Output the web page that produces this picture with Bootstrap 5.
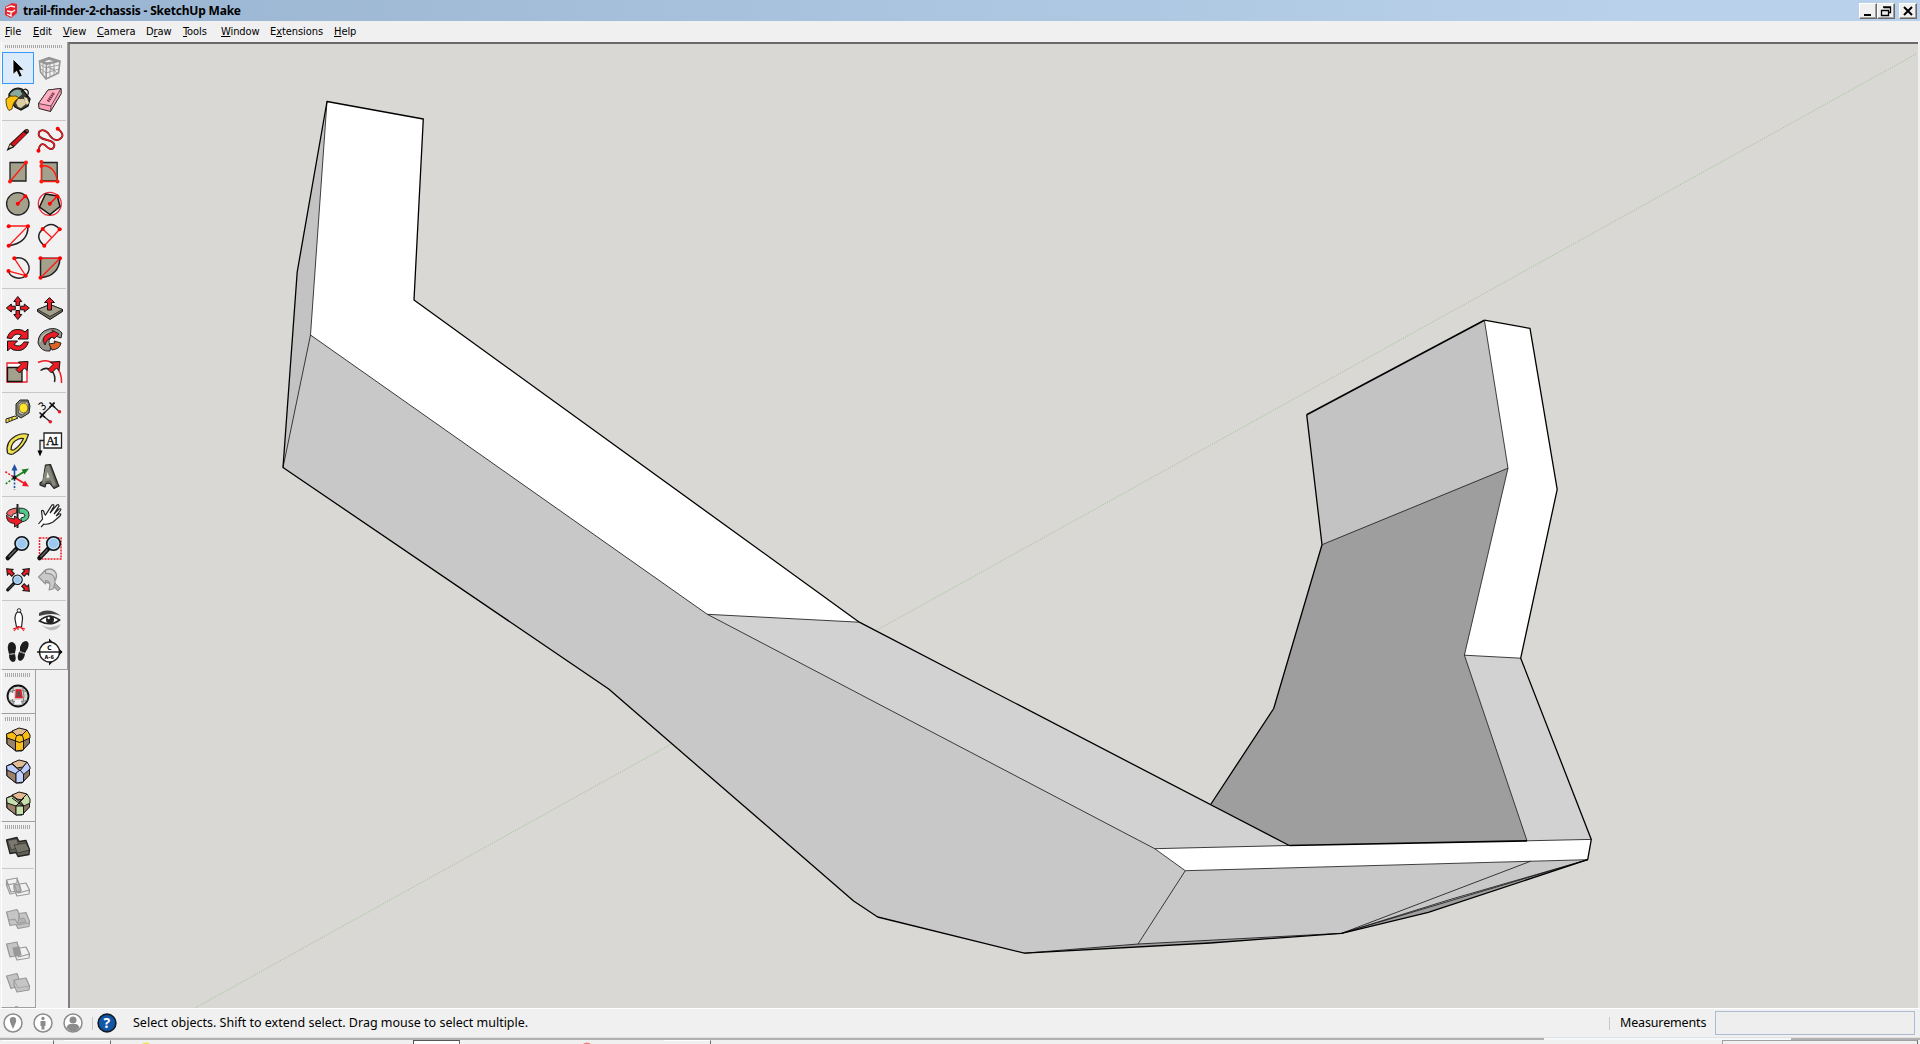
<!DOCTYPE html>
<html lang="en">
<head>
<meta charset="utf-8">
<title>trail-finder-2-chassis - SketchUp Make</title>
<link href="https://cdn.jsdelivr.net/npm/bootstrap@5.3.0/dist/css/bootstrap.min.css" rel="stylesheet">
<style>
html,body{height:100%;overflow:hidden}
body{background:#f0f0f0;color:#000;font-family:"DejaVu Sans Condensed","DejaVu Sans",sans-serif;font-size:11px;line-height:1}
svg{display:block;flex:none}
.titlebar{height:21px;background:linear-gradient(90deg,#99b4d1,#b9d1ea 85%);padding:0 3px 0 4px}
.titlebar h1{font-family:"Noto Sans",sans-serif;font-size:12px;line-height:21px;font-weight:700;margin:0 0 0 4px;width:230px;white-space:nowrap;letter-spacing:-.2px}
.winbtn{width:18px;height:16px;background:#f0f0f0;border:1px solid #fff;border-right-color:#696969;border-bottom-color:#696969;box-shadow:inset -1px -1px #a0a0a0;padding:0;border-radius:0}
.menubar{height:21px;padding-left:5px}
.menubar a{color:#000;text-decoration:none;font-family:"DejaVu Sans Condensed",sans-serif;white-space:nowrap;line-height:21px;letter-spacing:-.08px}
.menubar u{text-underline-offset:1px}
.dock{width:68px;padding-left:1px}
.bar{background:#f1f1f1;border-left:1px solid #fff;border-right:1px solid #a0a0a0;border-bottom:1px solid #a0a0a0;flex:none}
.bar-wide{width:67px;height:628px;border-right-width:1px}
.bar-thin{width:35px}
.bar .grip{height:4px;margin:3px 4px 3px 3px;background:repeating-linear-gradient(90deg,#a9a9a9 0 1px,transparent 1px 2px);width:26px}
.bar-wide .grip{width:57px;height:3px;margin-bottom:4px}
.bar .rule{height:1px;background:#c8c8c8;margin:4px 1px 3px 0}
.tools{width:64px}
.tool{width:32px;height:32px;padding:0;border:0;background:none;display:block}
.tool.active{background:#dbebfb;outline:1px solid #3399ff;outline-offset:-1px}
.viewport{background:#d9d8d4;border-left:2px solid #808080;border-top:2px solid #696969;margin-right:2px;min-width:0}
.statusbar{height:30px;border-top:1px solid #fff;font-family:"Noto Sans",sans-serif;font-size:12.5px;border-bottom:1px solid #e2e2e2;padding-left:3px}
.vr-line{width:1px;height:13px;background:#c8c8c8}
.measure{width:200px;height:24px;border:1px solid #abbbd3;background:#eee}
.taskstrip{height:6px;padding-top:2px;background:linear-gradient(90deg,#b0b0b0 1544px,#f4f8fa 1544px 1791px,#b0b0b0 1791px) 0 0/100% 2px no-repeat}
.taskstrip i{height:4px;border-top:1px solid #fff;border-right:1px solid #696969}
</style>
<script src="https://cdn.jsdelivr.net/npm/bootstrap@5.3.0/dist/js/bootstrap.bundle.min.js"></script>
</head>
<body class="d-flex flex-column">

<svg width="0" height="0" class="position-absolute">
 <defs>
  <g id="arrowUp"><path d="M0-11.500l4 5h-2.200v4h-3.600v-4H-4z" fill="#ed1c24" stroke="#111" stroke-width="1"/></g>
  <g id="lens"><path d="M-5 5L-14 14.500" stroke="#111" stroke-width="4.500" stroke-linecap="round"/><path d="M-6 6L-13 13.500" stroke="#666" stroke-width="1.400"/><circle r="6.800" fill="#9cc8ee" stroke="#111" stroke-width="1.600"/><circle r="5" fill="none" stroke="#c5e1f7" stroke-width="1"/></g>
  <g id="cube" stroke="#161616" stroke-width="1" stroke-linejoin="round"><path d="M4.500 10L16 5l7.500.500L27.500 11v7.500L20 27h-6L5 20z" fill="#927e68"/><path d="M5 13l9 4v10L5 20z" fill="#9b8269"/><path d="M20 17l7.500-4v6L20 27z" fill="#88755f"/></g>
 </defs>
</svg>

<header class="titlebar d-flex align-items-center">
 <svg width="15" height="15" viewBox="0 0 15 15"><path d="M1 4l7-4 5 1 0 9-6 5-6-3z" fill="#e8232b"/><path d="M2 5l5-2 4 1M3 8l5 1 3-2M3 11l4 2V9" fill="none" stroke="#fff" stroke-width="1.300"/></svg>
 <h1>trail-finder-2-chassis - SketchUp Make</h1>
 <div class="ms-auto d-flex">
  <button class="winbtn" aria-label="Minimize"><svg width="16" height="14"><path d="M4 10h7v2H4z"/></svg></button>
  <button class="winbtn" aria-label="Restore"><svg width="16" height="14"><path d="M5.500 3.500h7v5h-2M5 3h8M3.500 6.500h7v5h-7zM3 6.500h8" fill="none" stroke="#000" stroke-width="1.300"/></svg></button>
  <button class="winbtn ms-1" aria-label="Close"><svg width="16" height="14"><path d="M4 3l8 8M12 3l-8 8" stroke="#000" stroke-width="2"/></svg></button>
 </div>
</header>

<nav class="menubar d-flex">
 <a style="width:28px"><u>F</u>ile</a><a style="width:30px"><u>E</u>dit</a><a style="width:34px"><u>V</u>iew</a><a style="width:49px"><u>C</u>amera</a><a style="width:37px">D<u>r</u>aw</a><a style="width:38px"><u>T</u>ools</a><a style="width:49px"><u>W</u>indow</a><a style="width:64px">E<u>x</u>tensions</a><a><u>H</u>elp</a>
</nav>

<main class="d-flex flex-grow-1" style="min-height:0">
 <aside class="dock d-flex flex-column overflow-hidden flex-shrink-0">
  <div class="bar bar-wide">
   <div class="grip"></div>
   <div class="tools d-flex flex-wrap">
    <button class="tool active" aria-label="Select"><svg width="32" height="32"><path d="M11 7v15.500l3.600-3.300 2.700 6 3-1.300-2.700-5.700h4.800z" stroke="#fff" stroke-width=".8"/></svg></button>
    <button class="tool" aria-label="Make Component"><svg width="32" height="32" fill="none" stroke="#969696"><path d="M5.500 9L15 5.500l11 3.500-1.500 12L12 27 6.500 20zM5.500 9l7 3.500L26 9M12.500 12.500L12 27M8 9.500l7-2.500 8 2.500-10 1.500z" stroke-width="1.600"/><path d="M7 13l5 3 13-3M7 17l5 4 13-4M16 12v12M20 11v12M9 11v11M16 17h5M14 14l9 7" stroke-width=".9"/></svg></button>
    <button class="tool" aria-label="Paint Bucket"><svg width="32" height="32"><path d="M7 10Q12 2 20 5l4 5 4 5-2 7-7 4-6-3-6-8z" fill="#3c3c34" stroke="#111" stroke-width="1.300"/><path d="M8 10q5-6 11-3.500l1 4-5 4-5-1z" fill="#86a9a0"/><path d="M14 19l2-4 6 0 2 5-5 4-3-1z" fill="#dccda0"/><path d="M22 13l3 1 2 5-2 2-2-3z" fill="#e9dcb4"/><path d="M19 8q4-5 7-1 1 4-2 6" fill="none" stroke="#111" stroke-width="1.200"/><path d="M4 15q4-4 10-3l3 2q-6 3-7 11l-3 1.500q-3-3-3-11.500z" fill="#ffc20e" stroke="#4d3b08" stroke-width=".9"/></svg></button>
    <button class="tool" aria-label="Eraser"><svg width="32" height="32" stroke="#222" stroke-linejoin="round"><path d="M4.500 19.500L14 6l13-1.500.3 5L16.500 27.500 5 24.500z" fill="#ff9db4"/><path d="M4.500 19.500L14 6l13-1.500-10 17.500z" fill="#ffb0c2" stroke-width=".7"/><path d="M17 22l-.5 5.500" stroke-width=".7"/><path d="M14 17.500L20 8.500" stroke="#7d3247" stroke-width="3" stroke-dasharray="1.500 .6"/></svg></button>
   </div>
   <div class="rule"></div>
   <div class="tools d-flex flex-wrap">
    <button class="tool" aria-label="Line"><svg width="32" height="32"><path d="M4.500 27l3-7L23 5.500q4-1.500 4 2.500L11.500 23.500z" fill="#111"/><path d="M9 20L21.500 8l3 2L12 22z" fill="#d5131b"/><path d="M6.500 24l1.800-3.500 2.700 2.300z" fill="#e6cf9c"/><path d="M23 7l2.500-1 .5 2z" fill="#ef5858"/></svg></button>
    <button class="tool" aria-label="Freehand"><svg width="32" height="32"><path d="M24 5q9 7 0 11-5 1-10-7-5-5-9-1-2 6 8 8 9 2 7 7-3 5-9-2-5-3-6.500 5" fill="none" stroke="#3a1010" stroke-width="1.800"/><path d="M24 5q9 7 0 11-5 1-10-7-5-5-9-1-2 6 8 8 9 2 7 7-3 5-9-2-5-3-6.500 5" fill="none" stroke="#ed1c24" stroke-width="1.300"/><circle cx="23.700" cy="4.700" r="2" fill="red"/><circle cx="4.500" cy="26.700" r="2" fill="red"/></svg></button>
    <button class="tool" aria-label="Rectangle"><svg width="32" height="32"><path d="M8 6.500h16v18.500H8z" fill="#a3a08c" stroke="#222" stroke-width="1.300"/><path d="M8 25.500L24 6.500" stroke="#ff1a10" stroke-width="1.300"/><circle cx="8" cy="25.500" r="2" fill="#ff1a10"/><circle cx="24" cy="6.500" r="2" fill="#ff1a10"/></svg></button>
    <button class="tool" aria-label="Rotated Rectangle"><svg width="32" height="32"><path d="M7.500 6.500h15.700v18.500H7.500z" fill="#a3a08c" stroke="#222" stroke-width="1.300"/><path d="M7.500 6.500v19h16M7.500 9.500q14 0 15.800 16" fill="none" stroke="#ff1a10" stroke-width="1.300"/><g fill="#ff1a10"><circle cx="7.400" cy="6" r="2"/><circle cx="7.400" cy="10" r="2"/><circle cx="7.400" cy="25.500" r="2"/><circle cx="23.500" cy="25.500" r="2"/></g></svg></button>
    <button class="tool" aria-label="Circle"><svg width="32" height="32"><circle cx="15.800" cy="15.800" r="11.200" fill="#a3a08c" stroke="#222" stroke-width="1.300"/><path d="M15.800 15.800L23.300 8.300" stroke="red" stroke-width="1.300"/><circle cx="15.800" cy="15.800" r="2" fill="red"/><circle cx="23.300" cy="8.300" r="2" fill="red"/></svg></button>
    <button class="tool" aria-label="Polygon"><svg width="32" height="32"><circle cx="15.800" cy="15.800" r="11.500" fill="none" stroke="#ee2a34" stroke-width="1.300"/><path d="M11.500 6L23.300 8l2.700 10.500-10 8L5.500 19z" fill="#a3a08c" stroke="#111" stroke-width="1.500"/><path d="M15.800 15.800L23.300 8.300" stroke="red" stroke-width="1.300"/><circle cx="15.800" cy="15.800" r="2" fill="red"/><circle cx="23.300" cy="8.300" r="2" fill="red"/></svg></button>
    <button class="tool" aria-label="Arc"><svg width="32" height="32" fill="none"><path d="M26 6.500Q26 23 6.700 25.700" stroke="#222" stroke-width="1.500"/><path d="M6.700 6H26L6.700 25.700" stroke="#ff1a1a" stroke-width="1.300"/><g fill="red"><circle cx="6.700" cy="6.200" r="2"/><circle cx="26" cy="6.200" r="2"/><circle cx="6.700" cy="25.700" r="2"/></g></svg></button>
    <button class="tool" aria-label="2 Point Arc"><svg width="32" height="32" fill="none"><path d="M10.300 25.700Q0 17 8.700 9 17 0 25.700 9.300" stroke="#222" stroke-width="1.500"/><path d="M8.700 9l9 8.500M25.700 9.300L10.300 25.700" stroke="#ff1a1a" stroke-width="1.300"/><g fill="red"><circle cx="8.700" cy="9" r="2"/><circle cx="25.700" cy="9.300" r="2"/><circle cx="10.300" cy="25.700" r="2"/></g></svg></button>
    <button class="tool" aria-label="3 Point Arc"><svg width="32" height="32" fill="none"><path d="M12.300 6.300C24 3 32 16 23.700 23.700 18 29 7 25 6.700 18.700" stroke="#222" stroke-width="1.500"/><path d="M12.300 6.300l11.400 17.400-17-4.500" stroke="#ff1a1a" stroke-width="1.300"/><g fill="red"><circle cx="12.300" cy="6.300" r="2"/><circle cx="23.700" cy="23.700" r="2"/><circle cx="6.500" cy="19" r="2"/></g></svg></button>
    <button class="tool" aria-label="Pie"><svg width="32" height="32"><path d="M6.500 6.300H26Q25 24 6.500 25.700z" fill="#a3a08c" stroke="#222" stroke-width="1.500"/><path d="M6.500 6.300H26L6.500 25.700" stroke="#ff1a1a" fill="none" stroke-width="1.300"/><g fill="red"><circle cx="6.500" cy="6.300" r="2"/><circle cx="26" cy="6.300" r="2"/><circle cx="6.500" cy="25.700" r="2"/></g></svg></button>
   </div>
   <div class="rule"></div>
   <div class="tools d-flex flex-wrap">
    <button class="tool" aria-label="Move"><svg width="32" height="32"><g transform="translate(15.800 16)"><use href="#arrowUp"/><use href="#arrowUp" transform="rotate(90)"/><use href="#arrowUp" transform="rotate(180)"/><use href="#arrowUp" transform="rotate(270)"/></g></svg></button>
    <button class="tool" aria-label="Push/Pull"><svg width="32" height="32" stroke="#111" stroke-linejoin="round"><path d="M3.500 17.500L16 12.500l12.500 5v2L16 27.500 3.500 19.500z" fill="#6f6c5c"/><path d="M3.500 17.500L16 12.500l12.500 5L16 24.500z" fill="#a3a08c" stroke-width=".7"/><path d="M15.500 5.500l5 5h-3v7.500h-4v-7.500h-3z" fill="#ed1c24"/></svg></button>
    <button class="tool" aria-label="Rotate"><svg width="32" height="32" fill="#ed1c24" stroke="#111" stroke-linejoin="round"><path d="M5 14Q8 5 16 5.500q5 0 7 2.500l3-3v10H16l3.500-3.500q-6-4-10 3z"/><path d="M26.500 18q-3 9-11 8.500-5 0-7-2.500l-3 3V17h10L12 20.500q6 4 10-2.500z"/></svg></button>
    <button class="tool" aria-label="Follow Me"><svg width="32" height="32" stroke="#222"><path d="M4 19Q4 8 15 5q8-2 13 4l-1 5q-8-4-12 2-1 3 2 5l-1 6Q7 28 4 19z" fill="#97958a"/><path d="M6 18q2-9 11-10" fill="none" stroke="#d0cec5"/><path d="M9 17q0-7 10-9l-1-2 7 4-5 5-1-2q-6 1-8 8z" fill="#ed1c24"/><path d="M15 20l6-1-1-2 7 2q-1 6-9 7z" fill="#dc6425"/></svg></button>
    <button class="tool" aria-label="Scale"><svg width="32" height="32"><path d="M5 7h20v19H5z" fill="#fff" stroke="#ed1c24" stroke-width="1.300"/><path d="M5.500 11.500h14.500v14H5.500z" fill="#a3a08c" stroke="#111" stroke-width="1.300"/><path d="M26 5.500l-1 9-2.500-2.500-5 5-3.500-3.500 5-5L16.500 6z" fill="#ed1c24" stroke="#111"/></svg></button>
    <button class="tool" aria-label="Offset"><svg width="32" height="32" fill="none"><path d="M4 6.500Q13 2 21 9q7 7 6.500 18" stroke="#ed1c24" stroke-width="1.500"/><path d="M6.500 14.500Q13 10 18 15q4 5 2.500 11" stroke="#222" stroke-width="1.500"/><path d="M26 5.500l-1 9-2.500-2.500-5 5-3.500-3.500 5-5L16.500 6z" fill="#ed1c24" stroke="#111"/></svg></button>
   </div>
   <div class="rule"></div>
   <div class="tools d-flex flex-wrap">
    <button class="tool" aria-label="Tape Measure"><svg width="32" height="32" stroke="#222"><path d="M13 20L4 23v4l12-5z" fill="#f4e04a"/><path d="M7 22v3m3-4v3" stroke-width=".8"/><path d="M14 8l4-4h8l2 6-1 7-8 5-5-3z" fill="#85857a"/><path d="M16 9l3-3 7 0 .5 7-6 6-4-2z" fill="#c8c7b8" stroke-width=".6"/><ellipse cx="21.500" cy="12" rx="4.300" ry="4.800" fill="#ffe32e" stroke="#66581a" stroke-width=".8"/></svg></button>
    <button class="tool" aria-label="Dimension"><svg width="32" height="32"><path d="M6 21L20.500 7M8 19l8.300 6.700M18 9l7.500 6.700" stroke="#222" stroke-width="1.200" fill="none"/><path d="M5.500 16.500l5.500 5M6 22l5-6M15.500 6.500l5.500 5M15.500 11.500l5-5" stroke="#111" stroke-width="1.600"/><circle cx="16.300" cy="25.700" r="1.800" fill="#e81c2a"/><circle cx="25.500" cy="15.700" r="1.800" fill="#e81c2a"/><text x="5.500" y="13.500" font-size="11" transform="rotate(-40 9 10)">3</text></svg></button>
    <button class="tool" aria-label="Protractor"><svg width="32" height="32" stroke-linejoin="round"><path fill-rule="evenodd" d="M5.500 25Q3 14 13.500 8q7-3.500 13-1.500Q23 19 11 26q-3 1-5.500-1zM9 21.500q1.500 1 3 .3Q18 18 21.500 10.500q-2.500-.5-5 .5Q9 14.500 9 21.500z" fill="#f0e14a" stroke="#222" stroke-width="1.200"/></svg></button>
    <button class="tool" aria-label="Text"><svg width="32" height="32"><path d="M10 5h17.500v15H10z" fill="#fff" stroke="#222" stroke-width="1.300"/><path d="M10 12.500H6v11" fill="none" stroke="#222" stroke-width="1.300"/><path d="M3.500 22.500h5L6 28.500z"/><text x="12" y="16.500" font-family="Liberation Serif" font-size="12.500" textLength="13" stroke="#000" stroke-width=".3">A1</text></svg></button>
    <button class="tool" aria-label="Axes"><svg width="32" height="32" fill="none" stroke-width="1.600"><path d="M12.500 17.500V8" stroke="#1f4fa0"/><path d="M9.500 10.500l3-6.500 3 6.500z" fill="#1f4fa0"/><path d="M12.500 17.500l10-6" stroke="#1a7d1f"/><path d="M19.500 9.500l7.500-1-4.500 6z" fill="#1a7d1f"/><path d="M12.500 17.500l10 6" stroke="#ed1c24"/><path d="M20 26l7 .5-4-6z" fill="#ed1c24"/><path d="M12.500 19v11" stroke="#1f4fa0" stroke-dasharray="2 1.500"/><path d="M11 18.500l-8 6" stroke="#1a7d1f" stroke-dasharray="2 1.500"/><path d="M11 16.500l-8-5" stroke="#ed1c24" stroke-dasharray="2 1.500"/><circle cx="12.500" cy="17.500" r="2" fill="#111"/></svg></button>
    <button class="tool" aria-label="3D Text"><svg width="32" height="32" stroke-linejoin="round"><path d="M6 23l3-2L11.500 5l5-.5L24 24l1 2-5 2.500-4-5-4 0-1 3.500-5-2z" fill="#5d5c52" stroke="#222" stroke-width="1.200"/><path d="M12 6l3-.5L22 25l-3 1.500-2.500-6-4.500.5-1 3-3-1z" fill="#88877b"/><path d="M13.500 12l-1 6 3-.5z" fill="#f1f1f1"/></svg></button>
   </div>
   <div class="rule"></div>
   <div class="tools d-flex flex-wrap">
    <button class="tool" aria-label="Orbit"><svg width="32" height="32" stroke="#222"><path d="M15.500 4v24" stroke-width="2"/><path d="M15 8Q5 9 4.500 14l5 3q1-4 5-4z" fill="#ee6666"/><path d="M17 8q10 0 10 7 0 6-8 7v-4q5-1 4-3t-6-2z" fill="#53c88b"/><path d="M4.500 15q2 4 8 4v-3l8 5.500-8 5.500v-3.500Q4 23 4.500 15z" fill="#ed1c24"/></svg></button>
    <button class="tool" aria-label="Pan"><svg width="32" height="32"><path d="M4.500 24l4-5-1-8q2-2 3 3l1 1L18 5q2-1 2 1l-4 7 7-8q2-1 2 1l-5 8 5-5q3-1 1 2l-4 5 3-2q3-1 1 2l-7 6q-5 3-9 2l-3 3" fill="#fff" stroke="#222" stroke-width="1.200"/></svg></button>
    <button class="tool" aria-label="Zoom"><svg width="32" height="32"><use href="#lens" x="19.800" y="11.500"/></svg></button>
    <button class="tool" aria-label="Zoom Window"><svg width="32" height="32"><path d="M5.500 6H27v21H5.500z" fill="none" stroke="#ed1c24" stroke-width="1.500" stroke-dasharray="2 1"/><use href="#lens" x="19.500" y="11.500"/></svg></button>
    <button class="tool" aria-label="Zoom Extents"><svg width="32" height="32"><g transform="translate(16 16)"><use href="#arrowUp" transform="rotate(-45) translate(0 -4.500)"/><use href="#arrowUp" transform="rotate(45) translate(0 -4.500)"/><use href="#arrowUp" transform="rotate(135) translate(0 -4.500)"/></g><use href="#lens" transform="translate(15.500 15.800) scale(.7)"/></svg></button>
    <button class="tool" aria-label="Previous"><svg width="32" height="32" stroke-linejoin="round"><path d="M18 16l8.500 8.500-2.500 2.500-9-8z" fill="#aaa" stroke="#939393"/><circle cx="15.500" cy="12" r="7" fill="#d8d8d8" stroke="#939393" stroke-width="1.400"/><path d="M4.500 13l7-7v3.500q10-1 9.500 9.500l-2 6-4 1q3-9-3.500-9.500V20z" fill="#c9c9c9" stroke="#939393" stroke-width="1.100"/></svg></button>
   </div>
   <div class="rule"></div>
   <div class="tools d-flex flex-wrap">
    <button class="tool" aria-label="Position Camera"><svg width="32" height="32"><path d="M15.500 8q-2.500 2-2.500 7l1.500 8h5l1-8q0-5-2.500-7z" fill="#fff" stroke="#222" stroke-width="1.200"/><circle cx="17" cy="6.500" r="1.800" fill="#fff" stroke="#222"/><path d="M12 27q3-4 5-4t5 4M16 22v4M17 23l-6 2m6-2l6 2" stroke="#ed1c24" stroke-width="1.200" fill="none"/></svg></button>
    <button class="tool" aria-label="Look Around"><svg width="32" height="32"><path d="M5 9q10-6 22 3-8-4-22 0z" fill="#444"/><path d="M5.500 17q9-9 20-1-9 7-20 1z" fill="#fff" stroke="#222" stroke-width="1.600"/><circle cx="16" cy="15.500" r="4" fill="#222"/><circle cx="14.700" cy="14" r="1.200" fill="#fff"/><path d="M7 21q10 5 20-1-5 9-14 5z" fill="#bbb"/></svg></button>
    <button class="tool" aria-label="Walk"><svg width="32" height="32" fill="#1c1c1c"><path d="M6 14q-1-8 4-8 4 1 4 6l-1 5-6 1zM7 19l6-1q2 8-2 8-4-1-4-7z"/><path d="M18 11q2-6 6-6 4 1 2 7l-3 5-5-2zM17 16l6 2q-1 6-5 7-4-1-1-9z"/><path d="M7 18.500l6-1M17.500 15.500l5 2" stroke="#777"/></svg></button>
    <button class="tool" aria-label="Section Plane"><svg width="32" height="32"><path d="M15 2.500L28.500 16 15 29.500z"/><circle cx="15.500" cy="16" r="10" fill="#fff" stroke="#222" stroke-width="1.400"/><path d="M3 16h25" stroke="#111" stroke-width="1.400"/><text x="13.200" y="13.500" font-size="6.500" font-weight="700">C</text><text x="10.500" y="22.500" font-size="5.500" font-weight="700">A-6</text></svg></button>
   </div>
  </div>

  <div class="bar bar-thin" style="height:44px">
   <div class="grip"></div>
   <button class="tool" aria-label="Add Location"><svg width="32" height="32" fill="none"><circle cx="16" cy="16" r="10.500" fill="#d4d4d4" stroke="#111" stroke-width="1.800"/><path d="M7 12q9-4 18 0M6.500 20q9.500 4 19 0M11.500 7q-3 9 0 18M20.500 7q3 9 0 18" stroke="#777" stroke-width=".9"/><path d="M8 13h4v6H7zM13 20h6v4h-6z" fill="#f4f4f4"/><path d="M14.500 10h4l1.500 7.500h-6z" fill="#555" stroke="#ed1c24" stroke-width="1.700"/></svg></button>
  </div>
  <div class="bar bar-thin" style="height:108px">
   <div class="grip"></div>
   <button class="tool" aria-label="Round Corner"><svg width="32" height="32"><use href="#cube"/><g stroke="#161616"><path d="M4.500 10L10 8l9 4-5 5L5 14z" fill="#f9bd12"/><path d="M10 7l7-3 8 2-4 5q-4-1-6 1z" fill="#e2bd94"/><path d="M25 6l3 5v3l-7 3-1-6z" fill="#f9bd12"/><path d="M13.500 16q0-5 4-5t4 5v10l-8 1z" fill="#fcc018"/><path d="M13.500 17q4 3 8 0" fill="none"/></g></svg></button>
   <button class="tool" aria-label="Sharp Corner"><svg width="32" height="32"><use href="#cube"/><g stroke="#161616"><path d="M4.500 10L10 8l8 7-4 3L5 14z" fill="#bdcdff"/><path d="M10 7l7-3 8 2-4 5-6 1z" fill="#e2bd94"/><path d="M25 6l3 5v2l-7 6-3-4z" fill="#bdcdff"/><path d="M14 17l4-3 3.500 4v8l-7.500 1z" fill="#c4d2ff"/></g></svg></button>
   <button class="tool" aria-label="Bevel"><svg width="32" height="32"><use href="#cube"/><g stroke="#161616"><path d="M4.500 10L10 8l8 6-4 4-9-3z" fill="#c6dfab"/><path d="M10 7l7-3 8 2-5 6-5-1z" fill="#e8ba91"/><path d="M25 6l3 5v4l-6 3-4-5z" fill="#c6dfab"/><path d="M14 18h7.500v8.500l-7.500.5z" fill="#c6dfab"/><path d="M10 10l11 8M22 10l-8 8" fill="none"/></g></svg></button>
  </div>
  <div class="bar bar-thin" style="height:186px">
   <div class="grip"></div>
   <button class="tool" aria-label="Outer Shell"><svg width="32" height="32" stroke="#222" stroke-width="1.300" stroke-linejoin="round"><path d="M4.500 8L15 5.500l2 4 7-1 3.500 9-.5 5-11 2-2-4-6 1z" fill="#626052"/><path d="M5.500 8.500L14.500 7l3 8-8 3z" fill="#7b796d" stroke-width=".5"/><path d="M12 13l12-2 3.500 7-12 3z" fill="#77756a" stroke-width=".6"/></svg></button>
   <div class="rule"></div>
   <button class="tool" aria-label="Intersect"><svg width="32" height="32" fill="none" stroke="#989898" stroke-width="1.200" stroke-linejoin="round"><path d="M4.500 8L15 6l4 12-10 2zM4.500 8l0 5 3.500 9 10-2 1-3M5 13l10-2M12 13l12-2 3.500 7-11 3zM12 13v4l3 7 12-2 .5-4M15 6v5"/><path d="M12 13l5-1 2 7-4 1z" fill="#b8b8b8"/></svg></button>
   <button class="tool" aria-label="Union"><svg width="32" height="32" fill="#c5c5c5" stroke="#989898" stroke-width="1.200" stroke-linejoin="round"><path d="M4.500 8L15 5.500l2 4 7-1 3.500 9-.5 5-11 2-2-4-6 1z"/><path d="M7 16l6-1 3 6 11-2M17 10l1 5 4-1 2 4-8 1z" fill="#b4b4b4" stroke-width=".9"/></svg></button>
   <button class="tool" aria-label="Subtract"><svg width="32" height="32" fill="none" stroke="#989898" stroke-width="1.200" stroke-linejoin="round"><path d="M4.500 8L15 6l3 11-5 3-5 1z" fill="#c5c5c5"/><path d="M12 13l12-2 3.500 7-11 3zM12 13v4l3 7 12-2 .5-4"/><path d="M11 12l6-1 2 8-5 1z" fill="#999"/></svg></button>
   <button class="tool" aria-label="Trim"><svg width="32" height="32" fill="#c5c5c5" stroke="#989898" stroke-width="1.200" stroke-linejoin="round"><path d="M4.500 8L15 5.500l4 12-10 3z"/><path d="M12 12l12-2 3.500 8-.5 4-12 2-3-7z"/><path d="M12 12l4 8 11-2" fill="none" stroke-width=".7"/></svg></button>
   <svg width="32" height="8"><path d="M13 6.500h3" stroke="#aaa"/></svg>
  </div>
 </aside>

 <section class="viewport flex-grow-1">
  <svg width="1848" height="964" viewBox="70 44 1848 964" stroke-linejoin="round">
   <path d="M196 1007.500L1917 53.500" stroke="#a0c496" stroke-width=".95" stroke-dasharray="1.200 1.200"/>
   <!-- faces -->
   <path d="M327 101.500L297.200 272 283 467.500 310.500 335z" fill="#c3c3c3"/>
   <path d="M327 101.500L423.300 119 414 300 859.300 622.200 707.300 614.300 310.500 335z" fill="#fff"/>
   <path d="M310.500 335L707.300 614.300 1154.700 848.700 1185.300 870.700 1587.700 859.700 1428.300 912.300 1341.700 933.300 1024.500 953.200 877.700 917 853.600 901 608.700 689 283 467.500z" fill="#c8c8c8"/>
   <path d="M707.300 614.300L859.300 622.200 1289.300 845.500 1154.700 848.700z" fill="#d2d2d2"/>
   <path d="M1484.400 320.200L1306.700 414.700 1322 544.700 1508 468.200z" fill="#c3c3c3"/>
   <path d="M1322 544.700L1508 468.200 1464.400 655.200 1527 840.800 1289.300 845.500 1211 804 1273.700 708.500z" fill="#9e9e9e"/>
   <path d="M1484.400 320.200L1530 328.400 1557.200 489.400 1520.700 658.200 1464.400 655.200 1508 468.200z" fill="#fff"/>
   <path d="M1464.400 655.200L1520.700 658.200 1591.300 839.400 1527 840.800z" fill="#d2d2d2"/>
   <path d="M1154.700 848.700L1591.300 839.400 1587.700 859.700 1185.300 870.700z" fill="#fff"/>
   <path d="M1341.700 933.300L1587.700 859.700 1428.300 912.300zM1024.500 953.200L1138 944 1341.700 933.300 1210 943z" fill="#9e9e9e"/>
   <!-- interior edges -->
   <g fill="none" stroke="#111" stroke-width=".8">
    <path d="M327 101.500L310.500 335 283 467.500M310.500 335L707.300 614.300 1154.700 848.700 1185.300 870.700 1587.700 859.700M707.300 614.300L859.300 622.200M1185.300 870.700L1138 944M1154.700 848.700L1289.300 845.500M1527 840.800L1591.300 839.400M1530.700 861.200L1341.700 933.300 1587.700 859.700M1341.700 933.300L1450 899.500 1587.700 859.700M1024.500 953.200L1138 944 1341.700 933.300"/>
    <path d="M1484.400 320.200L1508 468.200 1322 544.700M1508 468.200L1464.400 655.200 1520.700 658.200M1464.400 655.200L1527 840.800"/>
   </g>
   <!-- silhouette -->
   <g fill="none" stroke="#000" stroke-width="1.300">
    <path d="M859.300 622.200L414 300 423.300 119 327 101.500 297.200 272 283 467.500 608.700 689 853.600 901 877.700 917 1024.500 953.200 1210 943 1341.700 933.300 1428.300 912.300 1587.700 859.700 1591.300 839.400 1520.700 658.200 1557.200 489.400 1530 328.400 1484.400 320.200"/>
    <path d="M1322 544.700L1306.700 414.700M1322 544.700L1273.700 708.500 1211 804M859.300 622.200L1289.300 845.500"/>
    <path d="M1484.400 320.200L1306.700 414.700M1289.300 845.500L1527 840.800" stroke-width="1.700"/>
   </g>
  </svg>
 </section>
</main>

<footer class="statusbar d-flex align-items-center flex-shrink-0">
 <svg width="20" height="20" style="margin-right:10px"><circle cx="10" cy="10" r="9" fill="#fff" stroke="#8c8c8c" stroke-width="1.500"/><path d="M10 16L7 9q-1-5 3-5t3 5z" fill="#8c8c8c"/></svg>
 <svg width="20" height="20" style="margin-right:10px"><circle cx="10" cy="10" r="9" fill="#fff" stroke="#8c8c8c" stroke-width="1.500"/><circle cx="10" cy="5.500" r="1.700" fill="#8c8c8c"/><path d="M7.500 8h5v5h-1v3.500h-3V13h-1z" fill="#8c8c8c"/></svg>
 <svg width="20" height="20" style="margin-right:9px"><circle cx="10" cy="10" r="9" fill="#fff" stroke="#8c8c8c" stroke-width="1.500"/><circle cx="10" cy="7" r="3.500" fill="#8c8c8c"/><path d="M3.500 15q1-4 4-4h5q3 0 4 4-6 7-13 0z" fill="#8c8c8c"/></svg>
 <div class="vr-line" style="margin-right:4px"></div>
 <svg width="20" height="20" style="margin-right:16px"><circle cx="10" cy="10" r="8.900" fill="#1257a5" stroke="#111b28" stroke-width="1.600"/><text x="6.500" y="15" fill="#fff" font-family="Noto Sans" font-weight="700" font-size="14">?</text></svg>
 <span>Select objects. Shift to extend select. Drag mouse to select multiple.</span>
 <div class="vr-line ms-auto" style="margin-right:10px"></div>
 <span style="width:95px;letter-spacing:-.15px">Measurements</span>
 <div class="measure" style="margin-right:5px"></div>
</footer>
<div class="taskstrip d-flex flex-shrink-0">
 <i style="width:52px;margin-left:2px"></i><i style="width:47px;margin-left:10px"></i>
 <svg width="10" height="4" style="margin-left:30px"><ellipse cx="5" cy="5" rx="4" ry="2.500" fill="#f2e24c"/></svg>
 <i style="width:47px;margin-left:262px;background:#fff;border-top-color:#555;border-left:1px solid #555"></i>
 <svg width="12" height="4" style="margin-left:121px"><ellipse cx="6" cy="5" rx="4" ry="2.500" fill="#ef8080"/></svg>
 <i style="width:47px;margin-left:71px"></i>
 <i class="ms-auto" style="width:196px;margin-right:2px;border-top-color:#a0a0a0;border-left:1px solid #a0a0a0"></i>
</div>
</body>
</html>
